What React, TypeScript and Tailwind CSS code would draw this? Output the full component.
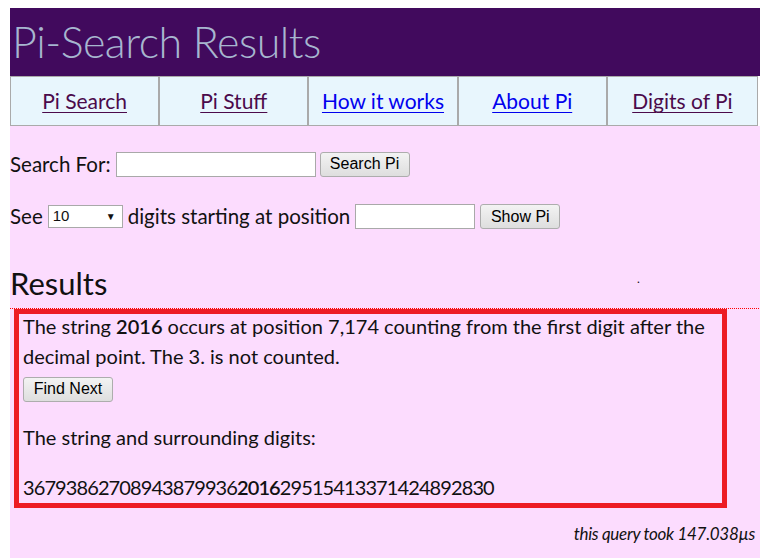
import React from 'react'

const font = { fontFamily: 'Lato, "Open Sans", sans-serif' }

const navItems = [
  { label: 'Pi Search', visited: true },
  { label: 'Pi Stuff', visited: true },
  { label: 'How it works', visited: false },
  { label: 'About Pi', visited: false },
  { label: 'Digits of Pi', visited: true },
]

function Button({ children, className = '' }: { children: React.ReactNode; className?: string }) {
  return (
    <button
      className={
        'h-[25px] rounded-[3px] border border-[#adadad] bg-gradient-to-b from-[#f3f3f3] to-[#dedede] px-[8px] text-[16px] leading-none text-black font-["Liberation_Sans",Arial,sans-serif] ' +
        className
      }
    >
      {children}
    </button>
  )
}

function TextBox({ className = '' }: { className?: string }) {
  return <div className={'h-[25px] border border-[#a9a9a9] bg-white ' + className} />
}

export default function App() {
  return (
    <div className="min-h-[559px] bg-white px-[10px] pt-[8px] text-[#111]" style={font}>
      <div className="w-[750px]">
        <header className="flex h-[68px] items-center bg-[#410a5d] pl-[2px]">
          <h1 className="text-[43px] font-light leading-none tracking-[-0.5px] text-[#a7b6cf] -mt-[2px]">
            Pi-Search Results
          </h1>
        </header>

        <nav className="grid h-[50px] w-[748px] grid-cols-5 border border-[#aaaaaa] bg-[#e8f6fd]">
          {navItems.map((n, i) => (
            <div
              key={n.label}
              className={
                'flex items-center justify-center ' + (i < navItems.length - 1 ? 'border-r-2 border-[#aaaaaa]' : '')
              }
            >
              <a
                href="#"
                className={
                  'text-[21px] underline underline-offset-[3px] decoration-1 ' +
                  (n.visited ? 'text-[#4b0a4b]' : 'text-[#0000ee]')
                }
              >
                {n.label}
              </a>
            </div>
          ))}
        </nav>

        <main className="h-[432px] bg-[#fcdcfe] pt-[25px] text-[20.5px]">
          <div className="flex h-[26px] items-center">
            <span className="mr-[5px]">Search For:</span>
            <TextBox className="w-[200px]" />
            <Button className="ml-[4px] w-[90px]">Search Pi</Button>
          </div>

          <div className="mt-[27px] flex h-[25px] items-center">
            <span className="mr-[5px]">See</span>
            <div className="flex h-[23px] w-[75px] items-center justify-between border border-[#a9a9a9] bg-white pl-[4px] pr-[6px] text-[15px] font-['Liberation_Sans',Arial,sans-serif]">
              <span>10</span>
              <span className="text-[10px]">▼</span>
            </div>
            <span className="ml-[5px] mr-[5px]">digits starting at position</span>
            <TextBox className="w-[120px]" />
            <Button className="ml-[5px] w-[80px]">Show Pi</Button>
          </div>

          <div className="relative mt-[33px] pb-[4px]">
            <h2 className="text-[31px] leading-[42px]">Results</h2>
            <span className="absolute left-[627px] top-[8px] text-[12px]">.</span>
          </div>
          <div className="h-[1px] bg-[repeating-linear-gradient(90deg,#ff0000_0_1px,transparent_1px_2px)]" />

          <div className="ml-[4px] w-[713px] border-[5px] border-[#ed1c24] px-[4px] pb-[1px] text-[20px] leading-[30px]">
            <p className="-mt-[3px]">
              The string <b className="font-semibold">2016</b> occurs at position 7,174 counting from the first digit
              after the decimal point. The 3. is not counted.
            </p>
            <Button className="mt-[3px] w-[90px]">Find Next</Button>
            <p className="mt-[20px]">The string and surrounding digits:</p>
            <p className="mt-[20px] tracking-[-0.9px]">
              36793862708943879936<b className="font-semibold">2016</b>29515413371424892830
            </p>
          </div>

          <p className="mt-[13px] pr-[5px] text-right text-[17px] italic tracking-[-0.3px]">
            this query took 147.038µs
          </p>
        </main>
      </div>
    </div>
  )
}
